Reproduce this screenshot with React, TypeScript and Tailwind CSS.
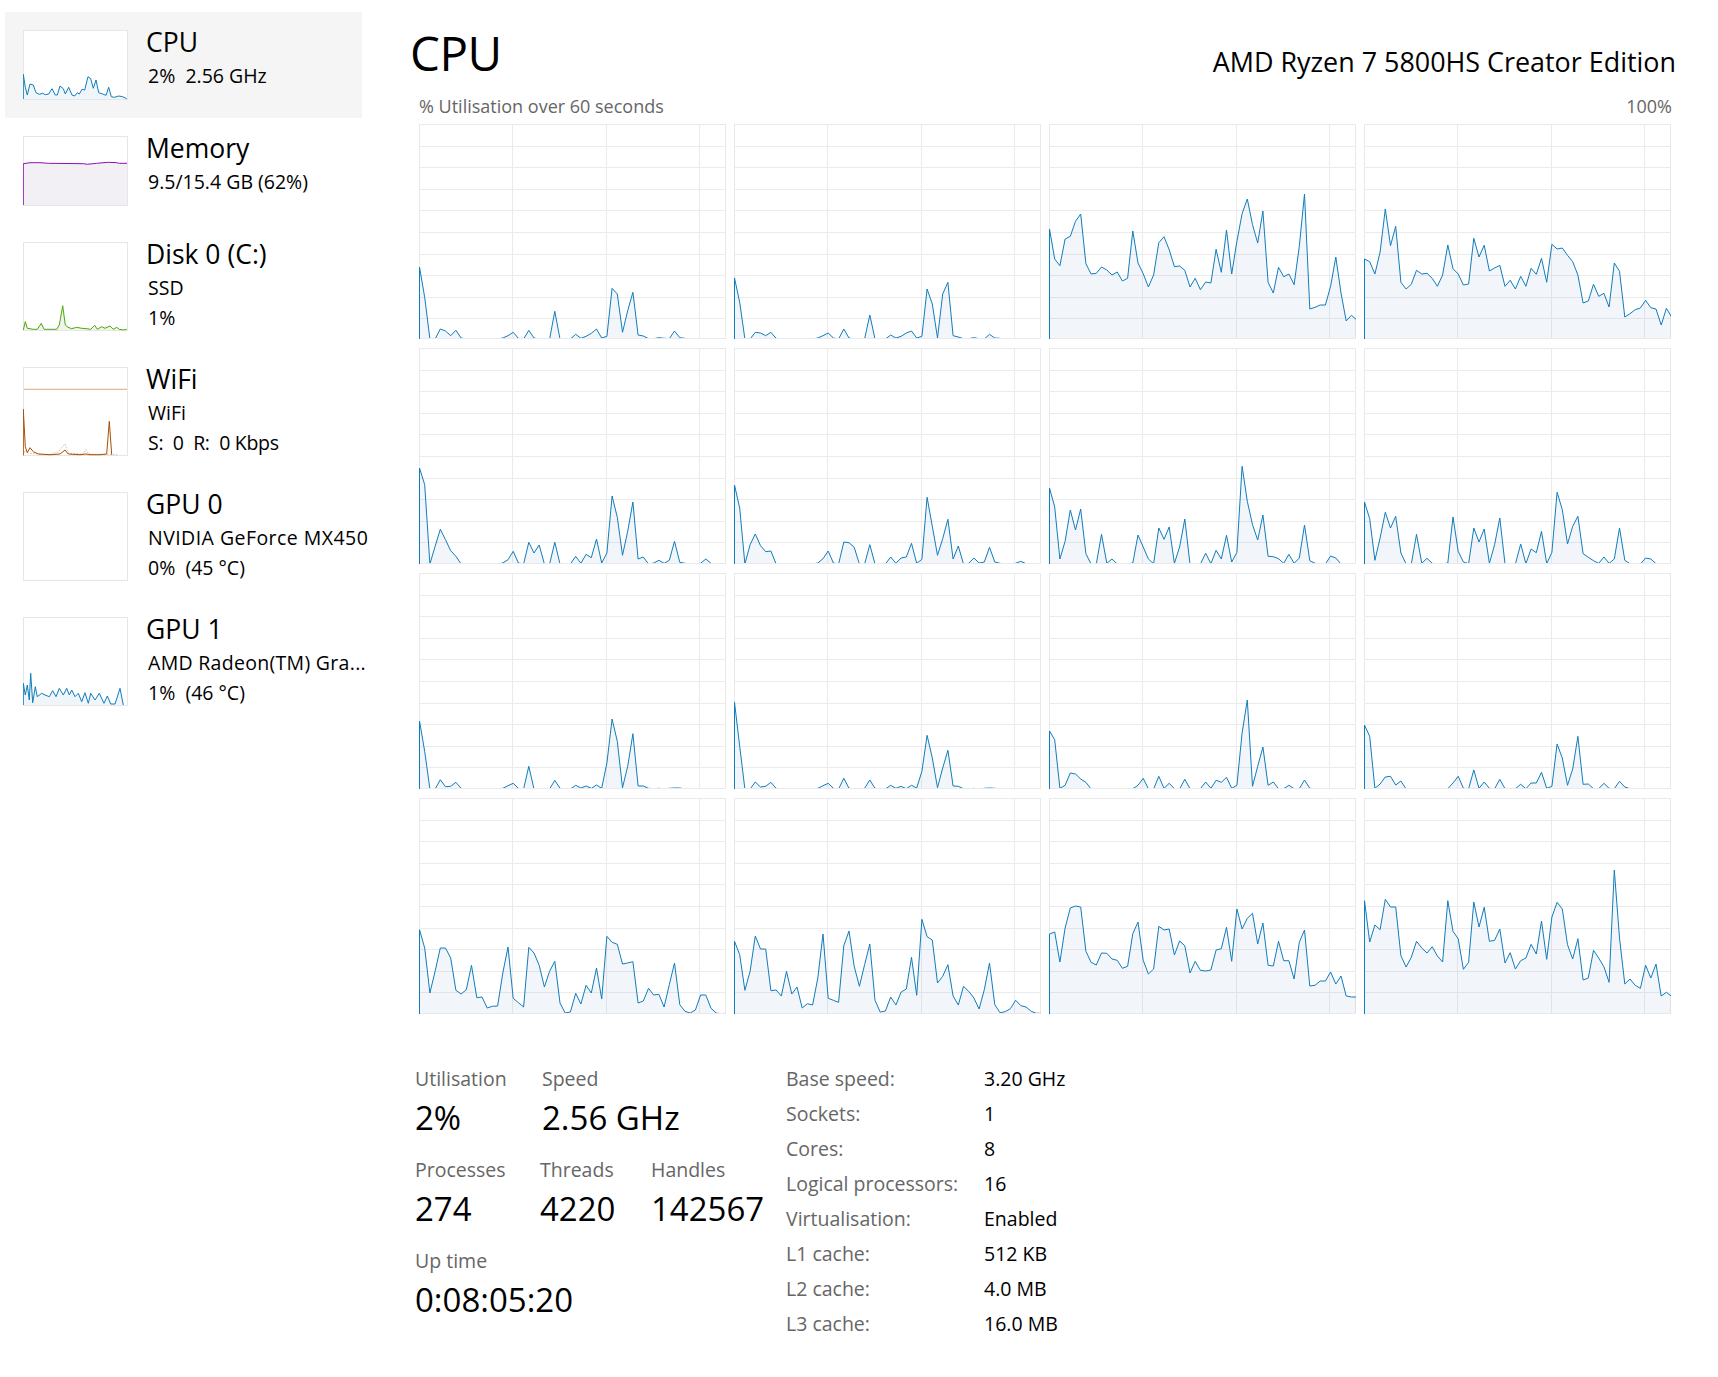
const FONT = "font-['Open_Sans','Noto_Sans',sans-serif]";

// Per-core history, heights measured from the bottom of each graph (in 1/3 px)
const CORES: number[][] = [
  [216,125,0,0,30,24,10,26,3,0,0,0,0,0,0,0,3,10,20,2,0,26,3,0,0,0,83,0,0,0,14,2,8,17,30,3,8,152,135,20,85,140,12,9,1,1,4,2,1,24,4,2],
  [183,110,0,0,20,18,10,20,2,0,0,0,0,0,0,0,3,10,18,3,0,30,3,0,0,0,72,0,0,0,12,3,8,18,24,3,8,150,105,3,135,170,10,6,1,1,4,1,0,14,3,2],
  [330,240,220,300,308,353,375,226,195,197,216,207,192,201,174,182,324,228,196,156,192,289,307,268,217,219,206,156,182,148,171,168,269,200,327,195,293,376,420,343,288,384,170,138,215,187,195,163,278,435,90,95,102,102,158,246,138,54,71,58],
  [240,232,195,261,390,280,338,170,150,164,206,195,197,182,158,192,282,211,195,162,165,302,246,281,204,213,221,158,176,150,188,158,212,194,242,170,284,270,273,251,232,192,108,114,164,128,137,96,228,203,66,76,88,93,116,94,90,42,92,66],
  [288,238,0,53,104,73,40,23,0,0,0,0,0,0,0,0,3,13,38,3,0,65,33,57,0,0,65,0,0,0,23,2,29,19,75,3,33,204,140,26,98,186,15,21,0,3,11,2,11,68,5,2,0,0,2,15,2],
  [237,168,0,58,90,55,37,39,0,0,0,0,0,0,0,0,3,16,39,3,0,66,64,50,0,0,58,0,0,0,21,2,18,21,62,2,14,200,113,26,76,134,15,54,0,2,18,3,6,50,6,2,0,0,2,8,1],
  [228,171,15,68,162,102,165,31,0,0,89,2,15,0,0,0,3,87,51,15,1,108,74,111,2,51,135,0,0,0,32,1,41,15,86,6,35,293,188,118,72,147,23,22,16,2,29,2,18,117,10,2,0,0,24,18,0],
  [186,136,11,78,155,108,143,33,0,0,89,2,17,2,0,0,3,141,38,6,1,108,66,105,2,58,138,0,0,0,60,1,45,34,98,1,35,215,163,60,113,143,31,20,10,2,21,2,15,108,11,1,0,0,18,15,1],
  [204,113,0,0,28,7,8,20,2,0,0,0,0,0,0,0,2,10,17,2,0,68,0,0,0,0,26,2,0,0,11,3,9,2,12,2,78,210,143,4,68,166,9,9,2,1,2,0,2,3,3,0],
  [260,128,0,0,21,6,8,20,2,0,0,0,0,0,0,0,2,10,17,2,0,32,2,0,0,2,27,2,0,0,11,2,8,1,11,3,53,161,93,4,63,116,9,8,1,0,2,0,2,3,2,0],
  [174,148,2,11,48,45,30,20,0,0,0,0,0,0,0,0,1,11,32,1,0,38,2,17,1,0,29,1,0,1,21,2,26,20,35,2,11,168,267,8,68,126,11,21,1,1,11,1,1,27,2,1],
  [192,158,2,15,36,38,12,24,0,0,0,0,0,0,0,0,1,18,38,2,1,57,2,21,2,1,29,1,0,1,14,1,18,18,50,2,8,135,93,11,60,158,14,15,1,1,17,2,1,23,6,1],
  [253,198,63,128,198,198,168,71,60,73,146,49,51,18,23,24,123,201,47,34,21,200,183,146,81,128,158,33,3,6,62,30,86,63,138,45,233,215,209,150,153,157,33,39,77,57,59,21,88,153,28,8,3,12,57,57,17,3,1,2],
  [218,178,71,128,234,195,195,70,72,54,128,60,81,18,31,27,108,240,47,41,35,205,249,143,83,148,210,41,6,9,51,27,66,75,170,56,284,232,222,93,113,148,54,27,83,68,48,15,73,153,28,4,7,16,41,25,21,8,2,2],
  [240,246,156,258,318,324,321,188,155,147,183,182,165,161,137,143,241,276,161,120,135,263,252,255,177,219,205,123,158,131,129,132,192,196,260,158,315,255,287,302,210,273,146,144,218,160,160,105,215,252,84,86,99,99,126,90,114,54,51,51],
  [340,216,267,253,344,321,321,175,141,170,218,198,183,202,174,156,340,248,226,134,155,336,261,320,218,221,255,153,184,135,160,168,209,180,279,164,291,335,315,208,165,226,102,108,191,168,142,95,432,228,90,105,86,77,146,108,150,54,65,53],
];

const ROW_HEIGHTS = [215, 216, 216, 216];
const STEP = 5.205;
const VERTICALS = [93.5, 187.5, 280.5];

function CoreGraph({ values, height }: { values: number[]; height: number }) {
  const w = 307;
  const pts = values.map((v, i) => `${(0.5 + i * STEP).toFixed(1)},${(height - v / 3).toFixed(1)}`);
  const line = `0.5,${height} ${pts.join(" ")}`;
  const last = (0.5 + (values.length - 1) * STEP).toFixed(1);
  return (
    <svg width={w} height={height} className="block">
      <rect x="0.5" y="0.5" width={w - 1} height={height - 1} fill="#fff" stroke="#e9e9e9" />
      {Array.from({ length: 9 }, (_, i) => {
        const y = Math.round((i + 1) * 21.6) + 0.5;
        return <line key={i} x1="1" x2={w - 1} y1={y} y2={y} stroke="#ebebeb" />;
      })}
      {VERTICALS.map((x) => (
        <line key={x} x1={x} x2={x} y1="1" y2={height} stroke="#ebebeb" />
      ))}
      <polygon points={`${line} ${last},${height}`} fill="#1a5aa0" fillOpacity="0.06" />
      <polyline points={line} fill="none" stroke="#117dbb" strokeWidth="1" />
      <line x1="1" x2={w} y1={height - 0.5} y2={height - 0.5} stroke="#e9e9e9" />
    </svg>
  );
}

type Series = { pts: number[][]; stroke: string; fill?: string; dashed?: boolean };

// thumbnail points are in 3x coordinates, offset by the thumb's top edge
function Thumb({ h, top, series = [] }: { h: number; top: number; series?: Series[] }) {
  const map = (p: number[]) => `${((p[0] - 69) / 3).toFixed(1)},${((p[1] - top) / 3).toFixed(1)}`;
  return (
    <svg width={105} height={h} className="block shrink-0">
      <rect x="0.5" y="0.5" width="104" height={h - 1} fill="#fff" stroke="#e6e6e6" />
      {series.map((s, i) => (
        <g key={i}>
          {s.fill && (
            <polygon
              points={[...s.pts, [s.pts[s.pts.length - 1][0], s.pts[0][1]]].map(map).join(" ")}
              fill={s.fill}
            />
          )}
          <polyline
            points={s.pts.map(map).join(" ")}
            fill="none"
            stroke={s.stroke}
            strokeWidth="1"
            strokeDasharray={s.dashed ? "1.5 1.5" : undefined}
          />
        </g>
      ))}
    </svg>
  );
}

const CPU_PTS = [[70,297],[70,223],[76,262],[82,285],[90,252],[100,255],[108,278],[118,283],[128,280],[136,284],[146,282],[156,266],[166,285],[172,285],[180,258],[190,266],[196,282],[206,262],[216,285],[224,288],[232,278],[238,282],[246,268],[254,270],[264,230],[272,236],[280,265],[288,240],[296,278],[308,282],[318,286],[326,262],[334,290],[344,292],[356,288],[368,290],[380,296]];
const MEM_PTS = [[70,615],[70,491],[90,488],[120,488],[145,490],[250,491],[262,493],[290,490],[325,487],[350,488],[358,490],[381,490]];
const DISK_PTS = [[70,990],[76,965],[82,985],[100,988],[112,988],[124,970],[132,988],[150,988],[170,988],[178,975],[188,917],[196,975],[204,982],[215,986],[230,982],[245,985],[260,986],[272,988],[284,976],[292,988],[305,980],[315,985],[330,978],[340,988],[350,982],[358,988],[370,990],[380,988]];
const WIFI_PTS = [[70,316],[70,178],[76,290],[82,308],[90,293],[100,305],[115,312],[150,314],[180,312],[195,300],[205,312],[240,314],[258,312],[270,314],[300,314],[320,312],[328,214],[335,314]];
const WIFI_DIM = [[70,316],[76,300],[85,310],[150,314],[175,305],[195,282],[205,310],[250,312],[258,298],[266,312],[352,314]];
const GPU1_PTS = [[70,1065],[70,1000],[76,1035],[82,1005],[88,1050],[92,970],[98,1058],[106,1010],[112,1040],[125,1030],[135,1035],[148,1040],[158,1022],[168,1040],[178,1015],[190,1035],[200,1015],[208,1035],[215,1020],[225,1040],[235,1030],[245,1055],[255,1028],[265,1060],[272,1030],[285,1050],[298,1030],[312,1060],[322,1038],[332,1062],[345,1062],[360,1015],[370,1065]];

const SIDEBAR = [
  { title: "CPU", lines: ["2%  2.56 GHz"], h: 70, top: 90, active: true, series: [{ pts: CPU_PTS, stroke: "#117dbb", fill: "#f0f5fa" }] },
  { title: "Memory", lines: ["9.5/15.4 GB (62%)"], h: 70, top: 408, series: [{ pts: MEM_PTS, stroke: "#8b12ae", fill: "#f3f0f5" }] },
  { title: "Disk 0 (C:)", lines: ["SSD", "1%"], h: 89, top: 726, series: [{ pts: DISK_PTS, stroke: "#4da60c", fill: "#eff6e9" }] },
  {
    title: "WiFi",
    lines: ["WiFi", "S:  0  R:  0 Kbps"],
    h: 89,
    top: 51,
    series: [
      { pts: [[72,118],[381,118]], stroke: "#dca883" },
      { pts: WIFI_DIM, stroke: "#eab591", dashed: true },
      { pts: WIFI_PTS, stroke: "#a74f01" },
    ],
  },
  { title: "GPU 0", lines: ["NVIDIA GeForce MX450", "0%  (45 °C)"], h: 89, top: 426 },
  { title: "GPU 1", lines: ["AMD Radeon(TM) Gra...", "1%  (46 °C)"], h: 89, top: 801, series: [{ pts: GPU1_PTS, stroke: "#117dbb", fill: "#f0f5fa" }] },
] as { title: string; lines: string[]; h: number; top: number; active?: boolean; series?: Series[] }[];

const SPECS = [
  ["Base speed:", "3.20 GHz"],
  ["Sockets:", "1"],
  ["Cores:", "8"],
  ["Logical processors:", "16"],
  ["Virtualisation:", "Enabled"],
  ["L1 cache:", "512 KB"],
  ["L2 cache:", "4.0 MB"],
  ["L3 cache:", "16.0 MB"],
];

function lineTracking(l: string) {
  if (l.startsWith("S:")) return "tracking-[-0.3px]";
  if (l.startsWith("AMD")) return "tracking-[0.3px]";
  if (l.startsWith("NVIDIA")) return "tracking-[0.45px]";
  return "";
}

function Stat({ label, value, className }: { label: string; value: string; className?: string }) {
  return (
    <div className={className}>
      <div className="text-[19.5px] leading-[30px] text-[#666]">{label}</div>
      <div className="text-[33px] leading-[48px] text-black whitespace-nowrap">{value}</div>
    </div>
  );
}

export default function App() {
  return (
    <div className={`${FONT} flex h-screen w-full overflow-hidden bg-white text-black`}>
      {/* Sidebar */}
      <nav className="w-[412px] shrink-0 pl-[5px] pt-[12px]">
        {SIDEBAR.map((item) => (
          <div key={item.title} className={`flex w-[357px] py-[18px] pl-[18px] ${item.active ? "bg-[#f5f5f5]" : ""}`}>
            <Thumb h={item.h} top={item.top} series={item.series} />
            <div className="-mb-[10px] -mt-[6px] ml-[18px] w-[222px] shrink-0 overflow-hidden whitespace-pre">
              <div className="text-[26.5px] leading-[37px]">{item.title}</div>
              {item.lines.map((l) => (
                <div key={l} className={`pl-[2px] text-[19.5px] leading-[30px] ${lineTracking(l)}`}>
                  {l}
                </div>
              ))}
            </div>
          </div>
        ))}
      </nav>

      {/* Main panel */}
      <main className="w-[1306px]">
        <header className="flex h-[90px] items-center justify-between pr-[42px] pt-[16px]">
          <h1 className="-ml-[2px] text-[47.5px] font-normal leading-[60px] tracking-[-0.5px]">CPU</h1>
          <div className="pt-[18px] text-[26.9px] leading-[36px]">AMD Ryzen 7 5800HS Creator Edition</div>
        </header>
        <div className="-mt-[1px] mb-[1px] flex h-[34px] items-center justify-between pl-[7px] pr-[46px] text-[18px] text-[#666]">
          <span>% Utilisation over 60 seconds</span>
          <span>100%</span>
        </div>
        <div className="ml-[7px] grid w-[1252px] grid-cols-[repeat(4,307px)] gap-x-[8px] gap-y-[9px]">
          {CORES.map((values, i) => (
            <CoreGraph key={i} values={values} height={ROW_HEIGHTS[Math.floor(i / 4)]} />
          ))}
        </div>

        {/* Stats */}
        <section className="mt-[47px] flex">
          <div className="ml-[3px] mt-[3px] w-[371px]">
            <div className="flex">
              <Stat label="Utilisation" value="2%" className="w-[127px]" />
              <Stat label="Speed" value="2.56 GHz" />
            </div>
            <div className="mt-[13px] flex">
              <Stat label="Processes" value="274" className="w-[125px]" />
              <Stat label="Threads" value="4220" className="w-[111px]" />
              <Stat label="Handles" value="142567" />
            </div>
            <Stat label="Up time" value="0:08:05:20" className="mt-[13px]" />
          </div>
          <div className="grid auto-rows-[35px] grid-cols-[198px_auto] items-center text-[19.5px]">
            {SPECS.map(([k, v]) => (
              <div key={k} className="contents">
                <span className="text-[#666]">{k}</span>
                <span>{v}</span>
              </div>
            ))}
          </div>
        </section>
      </main>
    </div>
  );
}
